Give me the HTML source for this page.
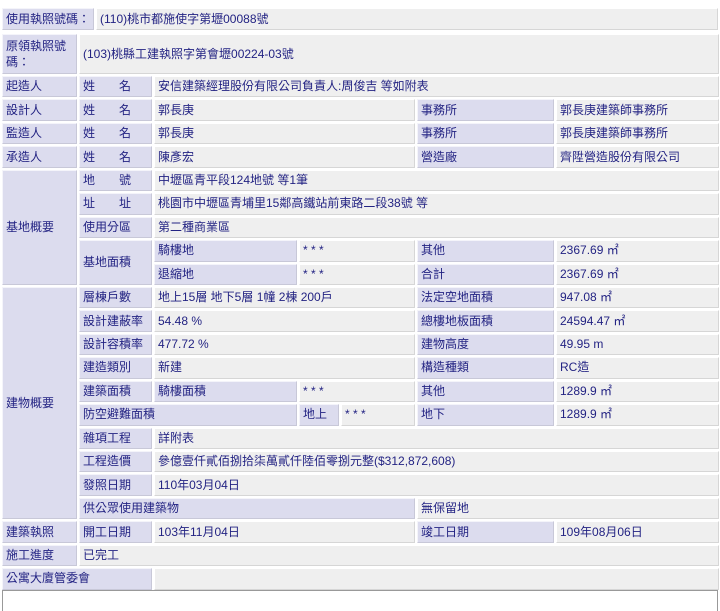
<!DOCTYPE html>
<html><head><meta charset="utf-8"><style>
body{margin:0;background:#fff;font-family:"Liberation Sans","Noto Sans CJK TC",sans-serif;font-size:12px;color:#232383;}
table{border-collapse:separate;border-spacing:2px;table-layout:fixed;position:absolute;left:0;}
td{padding:0 3px;height:19.45px;border:1px solid #d6d6d6;border-top-color:#fff;border-left-color:#fff;background:#efefef;white-space:nowrap;overflow:hidden;line-height:19px}
td.l{background:#dcdcee;border:1px solid #c8c8d8;border-top-color:#f4f4fa;border-left-color:#f4f4fa}
.box{position:absolute;left:2px;top:590px;width:714px;height:20px;border:1px solid #999;border-bottom:none}
</style></head><body>
<table style="top:6px;width:720px">
<colgroup><col style="width:92px"><col></colgroup>
<tr><td class="l" style="height:20px">使用執照號碼：</td><td style="height:20px">(110)桃市都施使字第壢00088號</td></tr>
</table>
<table style="top:32px;width:721px">
<colgroup><col style="width:75px"><col style="width:73px"><col style="width:143px"><col style="width:40px"><col style="width:74px"><col style="width:137px"><col></colgroup>
<tr><td class="l" style="height:38px;white-space:normal;line-height:16px">原領執照號碼：</td><td colspan="6" style="height:38px">(103)桃縣工建執照字第會壢00224-03號</td></tr>
<tr><td class="l">起造人</td><td class="l">姓　　名</td><td colspan="5">安信建築經理股份有限公司負責人:周俊吉 等如附表</td></tr>
<tr><td class="l">設計人</td><td class="l">姓　　名</td><td colspan="3">郭長庚</td><td class="l">事務所</td><td>郭長庚建築師事務所</td></tr>
<tr><td class="l">監造人</td><td class="l">姓　　名</td><td colspan="3">郭長庚</td><td class="l">事務所</td><td>郭長庚建築師事務所</td></tr>
<tr><td class="l">承造人</td><td class="l">姓　　名</td><td colspan="3">陳彥宏</td><td class="l">營造廠</td><td>齊陞營造股份有限公司</td></tr>
<tr><td class="l" rowspan="5">基地概要</td><td class="l">地　　號</td><td colspan="5">中壢區青平段124地號 等1筆</td></tr>
<tr><td class="l">址　　址</td><td colspan="5">桃園市中壢區青埔里15鄰高鐵站前東路二段38號 等</td></tr>
<tr><td class="l">使用分區</td><td colspan="5">第二種商業區</td></tr>
<tr><td class="l" rowspan="2">基地面積</td><td class="l">騎樓地</td><td colspan="2">* * *</td><td class="l">其他</td><td>2367.69 ㎡</td></tr>
<tr><td class="l">退縮地</td><td colspan="2">* * *</td><td class="l">合計</td><td>2367.69 ㎡</td></tr>
<tr><td class="l" rowspan="10">建物概要</td><td class="l">層棟戶數</td><td colspan="3">地上15層 地下5層 1幢 2棟 200戶</td><td class="l">法定空地面積</td><td>947.08 ㎡</td></tr>
<tr><td class="l">設計建蔽率</td><td colspan="3">54.48 %</td><td class="l">總樓地板面積</td><td>24594.47 ㎡</td></tr>
<tr><td class="l">設計容積率</td><td colspan="3">477.72 %</td><td class="l">建物高度</td><td>49.95 m</td></tr>
<tr><td class="l">建造類別</td><td colspan="3">新建</td><td class="l">構造種類</td><td>RC造</td></tr>
<tr><td class="l">建築面積</td><td class="l">騎樓面積</td><td colspan="2">* * *</td><td class="l">其他</td><td>1289.9 ㎡</td></tr>
<tr><td class="l" colspan="2">防空避難面積</td><td class="l">地上</td><td>* * *</td><td class="l">地下</td><td>1289.9 ㎡</td></tr>
<tr><td class="l">雜項工程</td><td colspan="5">詳附表</td></tr>
<tr><td class="l">工程造價</td><td colspan="5">參億壹仟貳佰捌拾柒萬貳仟陸佰零捌元整($312,872,608)</td></tr>
<tr><td class="l">發照日期</td><td colspan="5">110年03月04日</td></tr>
<tr><td class="l" colspan="4">供公眾使用建築物</td><td colspan="2">無保留地</td></tr>
<tr><td class="l">建築執照</td><td class="l">開工日期</td><td colspan="3">103年11月04日</td><td class="l">竣工日期</td><td>109年08月06日</td></tr>
<tr><td class="l">施工進度</td><td colspan="6">已完工</td></tr>
<tr><td class="l" colspan="2">公寓大廈管委會</td><td colspan="5"></td></tr>
</table>
<div class="box"></div>
</body></html>
